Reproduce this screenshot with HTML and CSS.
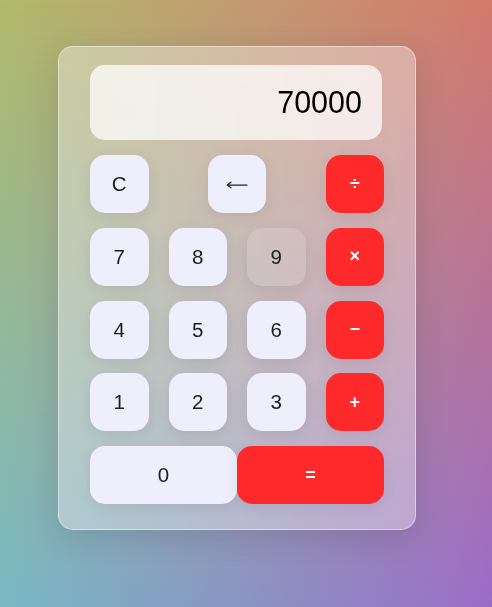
FILE: index.html
```html
<!DOCTYPE html>
<html lang="en">
<head>
<meta charset="utf-8">
<title>Calculator</title>
<link rel="stylesheet" href="styles.css">
</head>
<body>
<div class="bg-bottom"></div>
<div class="calc">
  <div class="display">70000</div>
  <div class="keys">
    <button class="key">C</button>
    <button class="key key-back" aria-label="Backspace"><svg class="arrow" width="22" height="12" viewBox="0 0 22 12"><path d="M1.2 6H21M1.2 6L5 3.2M1.2 6L5 8.8" fill="none" stroke="#222" stroke-width="1.25" stroke-linecap="round"/></svg></button>
    <button class="key op">÷</button>
    <button class="key">7</button>
    <button class="key">8</button>
    <button class="key ghost">9</button>
    <button class="key op">×</button>
    <button class="key">4</button>
    <button class="key">5</button>
    <button class="key">6</button>
    <button class="key op">−</button>
    <button class="key">1</button>
    <button class="key">2</button>
    <button class="key">3</button>
    <button class="key op">+</button>
    <div class="last-row">
      <button class="key wide">0</button>
      <button class="key wide op">=</button>
    </div>
  </div>
</div>
</body>
</html>
```
FILE: styles.css
```css
html, body {
  margin: 0;
  padding: 0;
}
body {
  position: relative;
  width: 492px;
  height: 607px;
  overflow: hidden;
  font-family: "Liberation Sans", Arial, sans-serif;
  background: linear-gradient(to right, #b1ba6a, #c49a70 50%, #d47a6c);
}
.bg-bottom {
  position: absolute;
  inset: 0;
  background: linear-gradient(to right, #78b9c4, #8a94c4 50%, #9b6cc8);
  -webkit-mask-image: linear-gradient(to bottom, transparent, #000);
  mask-image: linear-gradient(to bottom, transparent, #000);
}
.calc {
  position: relative;
  box-sizing: border-box;
  width: 358px;
  margin: 46px 0 0 58px;
  padding: 18px 31px 25px;
  border: 1px solid rgba(255, 255, 255, 0.45);
  border-radius: 15px;
  background: rgba(255, 255, 255, 0.34);
  backdrop-filter: blur(12px);
  box-shadow: 0 8px 32px rgba(0, 0, 0, 0.12);
}
.display {
  box-sizing: border-box;
  width: 292px;
  height: 75px;
  line-height: 75px;
  padding-right: 20px;
  border-radius: 15px;
  background: rgba(255, 255, 255, 0.74);
  text-align: right;
  font-size: 30.5px;
  color: #000;
}
.keys {
  margin-top: 15px;
  display: grid;
  grid-template-columns: repeat(4, 1fr);
  column-gap: 20px;
  row-gap: 14.75px;
}
.key {
  height: 58px;
  border: none;
  border-radius: 15px;
  background: #efeefc;
  color: #1e1e1e;
  font-family: "Liberation Sans", Arial, sans-serif;
  font-size: 20.5px;
  padding: 0;
  box-shadow: 0 4px 15px rgba(0, 0, 0, 0.08);
}
.key-back {
  grid-column: span 2;
  justify-self: center;
  width: 58.5px;
  display: flex;
  align-items: center;
  justify-content: center;
}
.arrow {
  display: block;
  margin-top: 2px;
}
.ghost {
  background: rgba(255, 255, 255, 0.12);
}
.op {
  background: #fe292b;
  color: #fff;
  font-weight: bold;
  font-size: 18px;
}
.last-row {
  grid-column: 1 / -1;
  display: flex;
}
.wide {
  flex: 1;
}
```
